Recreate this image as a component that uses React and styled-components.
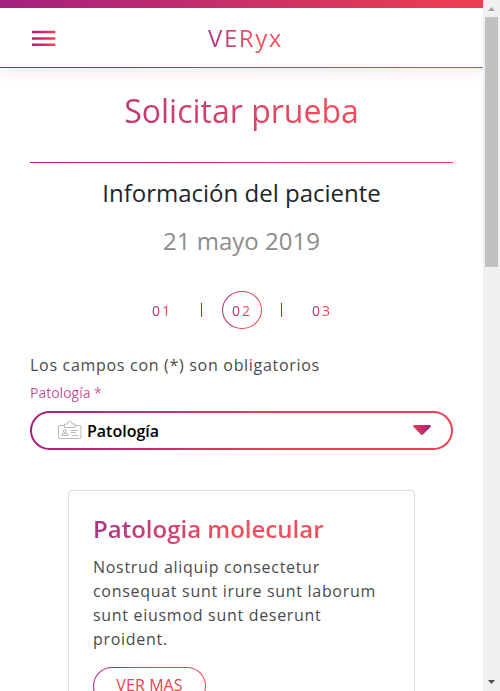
import React from 'react';
import styled, { createGlobalStyle, css } from 'styled-components';

const PURPLE = '#a3217f';
const RED = '#ef4050';

const GlobalStyle = createGlobalStyle`
  * { box-sizing: border-box; }
  body { margin: 0; background: #fff; font-family: 'Open Sans', sans-serif; overflow: hidden; }
  h1, h2, h3, p { margin: 0; }
`;

const gradientText = css`
  background: linear-gradient(to right, ${PURPLE}, ${RED} ${(p) => p.$stop || '100%'});
  -webkit-background-clip: text;
  background-clip: text;
  color: transparent;
`;

const gradientOutline = css`
  border: ${(p) => p.$line || 1}px solid transparent;
  background:
    linear-gradient(#fff, #fff) padding-box,
    linear-gradient(to right, ${PURPLE}, ${RED} ${(p) => p.$stop || '80%'}) border-box;
`;

const Shell = styled.div`
  display: flex;
  width: 500px;
  height: 691px;
  overflow: hidden;
`;

const Page = styled.div`
  width: 483px;
  height: 691px;
  overflow: hidden;
`;

const TopBar = styled.div`
  height: 8px;
  background: linear-gradient(to right, ${PURPLE}, ${RED});
`;

const Header = styled.header`
  display: grid;
  grid-template-columns: 40px 1fr 40px;
  align-items: center;
  height: 60px;
  padding: 0 24px 0 32px;
  border-bottom: 1px solid;
  border-image: linear-gradient(to right, ${PURPLE}, ${RED}) 1;
  box-shadow: 0 6px 12px -2px rgba(224, 48, 90, 0.13);
`;

const MenuIcon = styled.svg`
  display: block;
  width: 24px;
  height: 17px;
  margin-top: 1px;
`;

const Brand = styled.div`
  justify-self: center;
  font-size: 24px;
  font-weight: 400;
  line-height: 36px;
  letter-spacing: 1.6px;
  opacity: 0.9;
  ${gradientText}
`;

const Main = styled.main`
  display: flex;
  flex-direction: column;
  padding: 19px 30px 0;
`;

const Title = styled.h1`
  text-align: center;
  font-size: 32px;
  font-weight: 400;
  line-height: 48px;
  opacity: 0.94;
  ${gradientText}
`;

const Rule = styled.div`
  height: 1px;
  margin-top: 27px;
  background: linear-gradient(to right, ${PURPLE}, ${RED} 80%);
`;

const Subtitle = styled.h2`
  margin-top: 12px;
  text-align: center;
  font-size: 24px;
  font-weight: 400;
  line-height: 36px;
  color: #212529;
`;

const DateLine = styled.p`
  margin-top: 12px;
  text-align: center;
  font-size: 24px;
  line-height: 36px;
  color: #8c8c8c;
`;

const Steps = styled.div`
  display: flex;
  justify-content: center;
  align-items: center;
  height: 38px;
  margin-top: 32px;
`;

const Step = styled.div`
  display: flex;
  align-items: center;
  justify-content: center;
  width: 40px;
  height: 38px;
  ${(p) => p.$active && css`
    border-radius: 50%;
    ${gradientOutline}
  `}
`;

const StepLabel = styled.span`
  font-size: 14px;
  line-height: 20px;
  letter-spacing: 2px;
  margin: 1px 0 0 1px;
  ${gradientText}
`;

const Divider = styled.div`
  width: 1px;
  height: 14px;
  margin: 0 20px 0 19px;
  background: #e30613;
`;

const Note = styled.p`
  margin-top: 24px;
  font-size: 16px;
  line-height: 24px;
  letter-spacing: 0.7px;
  color: #4a4a4a;
`;

const FieldLabel = styled.label`
  margin-top: 5px;
  font-size: 14px;
  font-weight: 400;
  line-height: 21px;
  opacity: 0.8;
  ${gradientText}
`;

const Select = styled.div`
  display: flex;
  align-items: center;
  height: 39px;
  margin-top: 8px;
  padding: 0 20px 0 26px;
  border-radius: 20px;
  ${gradientOutline}
`;

const BadgeIcon = styled.svg`
  width: 24px;
  height: 20px;
  margin-top: -2px;
`;

const SelectValue = styled.span`
  flex: 1;
  margin-left: 5px;
  font-size: 16px;
  font-weight: 600;
  line-height: 24px;
  color: #000;
`;

const Caret = styled.svg`
  width: 18px;
  height: 10px;
  margin-top: -1px;
`;

const Card = styled.article`
  align-self: center;
  width: 347px;
  height: 260px;
  margin-top: 40px;
  padding: 20px 24px;
  border: 1px solid #dcdcdc;
  border-radius: 4px;
`;

const CardTitle = styled.h3`
  font-size: 24px;
  font-weight: 600;
  line-height: 36px;
  opacity: 0.92;
  ${gradientText}
`;

const CardText = styled.p`
  margin-top: 8px;
  font-size: 16px;
  line-height: 24px;
  letter-spacing: 0.7px;
  color: #4a4a4a;
`;

const CardButton = styled.button`
  display: block;
  width: 113px;
  height: 38px;
  margin-top: 16px;
  padding: 0 0 2px;
  border-radius: 19px;
  font: 400 16px/24px 'Open Sans', sans-serif;
  letter-spacing: 0.1px;
  ${gradientOutline}
  color: ${RED};
`;

const ScrollTrack = styled.div`
  display: flex;
  flex-direction: column;
  align-items: center;
  width: 17px;
  height: 691px;
  background: #f0f0f0;
`;

const ScrollThumb = styled.div`
  width: 13px;
  height: 250px;
  background: #c1c1c1;
`;

const ScrollArrow = styled.svg`
  width: 17px;
  height: 17px;
  margin-top: ${(p) => (p.$end ? 'auto' : 0)};
`;

const Stops = ({ id, from = PURPLE, to = RED, width = 24 }) => (
  <linearGradient id={id} gradientUnits="userSpaceOnUse" x1="0" y1="0" x2={width} y2="0">
    <stop offset="0" stopColor={from} />
    <stop offset="0.9" stopColor={to} />
  </linearGradient>
);

const steps = ['01', '02', '03'];

export default function App() {
  return (
    <Shell>
      <GlobalStyle />
      <Page>
        <TopBar />
        <Header>
          <MenuIcon viewBox="0 0 24 17">
            <defs><Stops id="menu" /></defs>
            <path fill="url(#menu)" d="M0 .7h23.300v2.600H0zM0 7.200h23.300v2.600H0zM0 13.400h23.300v2.600H0z" />
          </MenuIcon>
          <Brand $stop="60%">VERyx</Brand>
        </Header>
        <Main>
          <Title $stop="70%">Solicitar prueba</Title>
          <Rule />
          <Subtitle>Información del paciente</Subtitle>
          <DateLine>21 mayo 2019</DateLine>
          <Steps>
            {steps.map((s, i) => (
              <React.Fragment key={s}>
                {i > 0 && <Divider />}
                <Step $active={i === 1} $stop="60%"><StepLabel $stop="55%">{s}</StepLabel></Step>
              </React.Fragment>
            ))}
          </Steps>
          <Note>Los campos con (*) son obligatorios</Note>
          <FieldLabel $stop="60%">Patología *</FieldLabel>
          <Select $line={2} $stop="60%">
            <BadgeIcon viewBox="0 0 24 20" fill="none" stroke="#b8b8b8">
              <path d="M7 5.5H2Q.5 5.500 .5 7v10Q.5 18.500 2 18.500h19.500q1.500 0 1.500-1.500V7q0-1.500-1.500-1.500H17" />
              <path d="M6.500 7.500V4h3q0-3 2.300-3t2.300 3h3v3.500z" />
              <circle cx="6.800" cy="11" r="1.400" />
              <path d="M3.500 15.500q0-2.500 3.300-2.500t3.300 2.500zM13 10.500h7M13 12.500h5M14.500 15.500H20" />
            </BadgeIcon>
            <SelectValue>Patología</SelectValue>
            <Caret viewBox="0 0 18 10">
              <defs><Stops id="caret" from={RED} to={PURPLE} width={18} /></defs>
              <path fill="url(#caret)" d="M1 0h16q1.500.8.500 2L10 9.500q-1 .9-2 0L.500 2Q-.5.800 1 0z" />
            </Caret>
          </Select>
          <Card>
            <CardTitle $stop="45%">Patologia molecular</CardTitle>
            <CardText>
              Nostrud aliquip consectetur consequat sunt irure sunt laborum sunt eiusmod sunt deserunt proident.
            </CardText>
            <CardButton $stop="60%">VER MAS</CardButton>
          </Card>
        </Main>
      </Page>
      <ScrollTrack>
        <ScrollArrow viewBox="0 0 17 17"><path fill="#a3a3a3" d="M5 11h7L8.500 7z" /></ScrollArrow>
        <ScrollThumb />
        <ScrollArrow $end viewBox="0 0 17 17"><path fill="#505050" d="M5 6h7L8.500 10z" /></ScrollArrow>
      </ScrollTrack>
    </Shell>
  );
}
